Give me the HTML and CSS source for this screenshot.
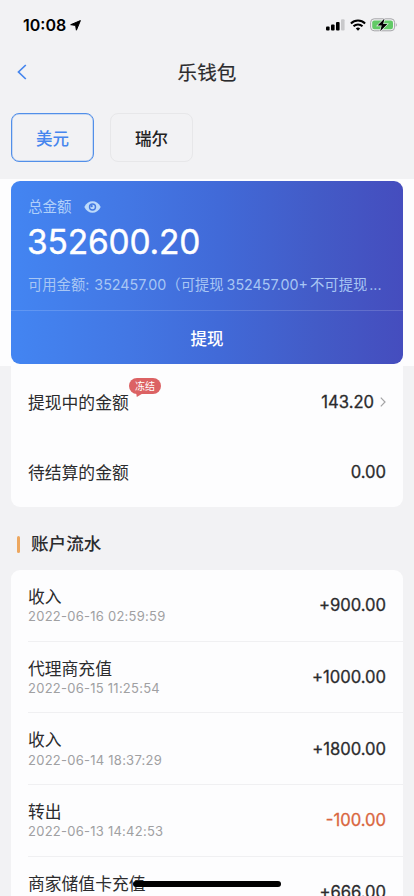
FILE: index.html
```html
<!DOCTYPE html>
<html lang="zh-CN">
<head>
<meta charset="utf-8">
<meta name="viewport" content="width=device-width, initial-scale=1">
<title>乐钱包</title>
<link rel="stylesheet" href="styles.css">
</head>
<body>
<div class="screen">
  <header class="status">
    <div class="clock"><span class="time">10:08</span>
      <svg width="11" height="11" viewBox="0 0 11 11"><path d="M10.4.6 6.4 10.2 5.6 5.4.7 4.7z" fill="#000" stroke="#000" stroke-width="1" stroke-linejoin="round"/></svg>
    </div>
    <div class="signals">
      <svg width="19" height="12" viewBox="0 0 19 12"><rect x="0" y="7.5" width="3.6" height="4" rx="1"/><rect x="5" y="5.5" width="3.6" height="6" rx="1"/><rect x="10" y="3" width="3.6" height="8.5" rx="1"/><rect x="15" y="0.3" width="3.6" height="11.2" rx="1" fill="#c9c9cb"/></svg>
      <svg class="wifi" width="16" height="12" viewBox="0 0 16 12" fill="none" stroke="#000" stroke-width="2"><path d="M.9 4.5a10.2 10.2 0 0 1 14.2 0M3.5 7.3a6.4 6.4 0 0 1 9 0"/><path d="M8 11.7 5.8 9.5a3.2 3.2 0 0 1 4.4 0z" fill="#000" stroke="none"/></svg>
      <svg class="battery" width="28" height="14" viewBox="0 0 28 14"><rect x=".6" y=".8" width="24" height="12" rx="3.6" fill="none" stroke="#a5a5a8"/><rect x="2.2" y="2.4" width="20.8" height="8.8" rx="2.2" fill="#62ca66"/><path d="M25.8 5v3.8c1.3-.6 1.3-3.2 0-3.8z" fill="#a5a5a8"/><path d="M14.5.5 7.5 7.6h4.2L10.2 13.3l7.2-7.2h-4.2z" fill="#000" stroke="#f2f2f4" stroke-width="1.2" paint-order="stroke"/></svg>
    </div>
  </header>
  <nav class="nav">
    <svg class="back" width="10" height="16" viewBox="0 0 10 16" fill="none" stroke="#4686ee" stroke-width="1.7"><path d="M8.8 1 1.5 8l7.3 7"/></svg>
    <h1>乐钱包</h1>
  </nav>
  <div class="tabs">
    <button class="tab active">美元</button>
    <button class="tab">瑞尔</button>
  </div>
  <div class="band">
    <section class="balance">
      <div class="label">总金额
        <svg width="17" height="12" viewBox="0 0 17 12"><path d="M.3 6C3.8-1.7 13.2-1.7 16.7 6 13.2 13.7 3.8 13.7.3 6z" fill="#bddafa"/><circle cx="8.5" cy="6" r="3.7" fill="#4379e2"/><circle cx="8.5" cy="6" r="2.3" fill="#bddafa"/><circle cx="7.6" cy="5.1" r="1.2" fill="#4379e2"/></svg>
      </div>
      <div class="total">352600.20</div>
      <div class="available"><span>可用金额:</span><span class="n1">352457.00</span><span class="p">（可提现</span><span class="n2">352457.00+</span><span class="q">不可提现</span><span class="dots">...</span></div>
      <button class="withdraw">提现</button>
    </section>
  </div>
  <section class="pending">
    <div class="line"><span class="name">提现中的金额<span class="badge">冻结<svg width="9" height="6" viewBox="0 0 9 6"><path d="M0 0h9L.8 5z" fill="#dc6264"/></svg></span></span>
      <span class="value">143.20</span><svg class="more" width="6" height="10" viewBox="0 0 6 10" fill="none" stroke="#a3a3a5" stroke-width="1.2"><path d="m.8.7 4.2 4.3L.8 9.3"/></svg></div>
    <div class="line"><span class="name">待结算的金额</span><span class="value">0.00</span></div>
  </section>
  <h2>账户流水</h2>
  <section class="flow">
    <div class="item"><div class="info"><div class="name">收入</div><time>2022-06-16 02:59:59</time></div><span class="value">+900.00</span></div>
    <div class="item"><div class="info"><div class="name">代理商充值</div><time>2022-06-15 11:25:54</time></div><span class="value">+1000.00</span></div>
    <div class="item"><div class="info"><div class="name">收入</div><time>2022-06-14 18:37:29</time></div><span class="value">+1800.00</span></div>
    <div class="item"><div class="info"><div class="name">转出</div><time>2022-06-13 14:42:53</time></div><span class="value out">-100.00</span></div>
    <div class="item"><div class="info"><div class="name">商家储值卡充值</div></div><span class="value">+666.00</span></div>
  </section>
  <div class="home"></div>
</div>
</body>
</html>
```

FILE: styles.css
```css
* { box-sizing: border-box; }
body { margin: 0; background: #f2f2f4; color: #2b2b2d; font-family: Inter, "Noto Sans CJK SC", sans-serif; }
button { font: inherit; background: none; padding: 0; border: 0; display: block; }
svg { display: block; flex: none; }
.screen { position: relative; width: 414px; height: 896px; overflow: hidden; }
.status { height: 48px; display: flex; justify-content: space-between; align-items: center; padding: 2px 16px 0 23px; }
.clock { display: flex; align-items: center; gap: 4px; color: #000; }
.time { font-size: 16px; font-weight: 600; line-height: 20px; }
.signals { display: flex; align-items: center; }
.wifi { margin-left: 5px; }
.battery { margin-left: 4px; }
.nav { height: 48px; display: flex; align-items: center; justify-content: center; position: relative; }
.back { position: absolute; left: 17px; top: 16px; }
h1 { margin: 2px 0 0; font-size: 19.6px; font-weight: 400; line-height: 28px; -webkit-text-stroke: .2px; }
.tabs { display: flex; gap: 16px; padding: 17px 11px 0; height: 83px; }
.tab { width: 83px; height: 49px; border: 1px solid #e7e7e9; border-radius: 8px; font-size: 16.5px; font-weight: 500; color: #222; }
.tab.active { border-color: #528fe9; box-shadow: inset 0 0 0 .5px #528fe980; color: #4686ee; }
.band { height: 187px; background: #fdfdfe; padding: 2px 11px; }
.balance { height: 183px; border-radius: 9px; background: linear-gradient(90deg, #4385f2 0%, #4377e4 30%, #416ad8 53%, #435bc7 78%, #454dbe 100%); color: #fff; display: flex; flex-direction: column; }
.label { height: 35px; padding: 16px 17px 0; display: flex; align-items: center; gap: 12px; font-size: 14.5px; line-height: 20px; color: #b0d0fa; }
.total { margin-top: 3px; padding-left: 16px; height: 46px; line-height: 46px; font-size: 33.5px; font-weight: 400; letter-spacing: -.2px; -webkit-text-stroke: .4px; }
.available { margin: 9px 17px 0; height: 22px; line-height: 22px; font-size: 14.3px; color: #a8c6f4; white-space: nowrap; display: flex; }
.n1 { margin-left: 5px; }
.n2 { margin-left: 3px; }
.q { margin-left: 2px; }
.dots { margin-left: 2px; }
.withdraw { margin-top: auto; height: 54px; border-top: 1px solid #ffffff28; color: #fff; font-size: 16.5px; font-weight: 500; }
.pending { margin: 0 11px; height: 141px; padding: 1px 17px 0; background: #fdfdfe; border-radius: 0 0 9px 9px; }
.line { height: 70px; display: flex; align-items: center; }
.line .name { padding-top: 1px; }
.name { position: relative; font-size: 16.8px; line-height: 24px; white-space: nowrap; }
.value { margin-left: auto; font-size: 16.6px; font-weight: 400; line-height: 24px; -webkit-text-stroke: .3px; }
.more { margin-left: 6px; }
.badge { position: absolute; left: 101px; top: -12px; width: 32px; height: 16px; border-radius: 8px; background: #dc6264; color: #fff; font-size: 10px; line-height: 16px; text-align: center; }
.badge svg { position: absolute; left: 7px; top: 14px; }
h2 { margin: 24px 0 13px 17px; height: 26px; display: flex; align-items: center; gap: 11px; font-size: 17.6px; line-height: 26px; font-weight: 500; }
h2::before { content: ""; width: 3px; height: 17px; border-radius: 2px; background: #eda75f; }
.flow { margin: 0 11px; padding-left: 17px; background: #fdfdfe; border-radius: 9px 9px 0 0; height: 360px; }
.item { height: 71.7px; display: flex; border-bottom: 1px solid #f0f0f2; padding: 14px 17px 0 0; }
.item .name { padding-top: 1px; }
.item .value { margin-top: 9.4px; }
time { display: block; margin-top: -1.6px; font-size: 13px; line-height: 18px; color: #a0a0a2; letter-spacing: .25px; }
.value.out { color: #d9663e; }
.home { position: absolute; left: 133px; top: 881px; width: 148px; height: 6px; border-radius: 3px; background: #000; }
```
